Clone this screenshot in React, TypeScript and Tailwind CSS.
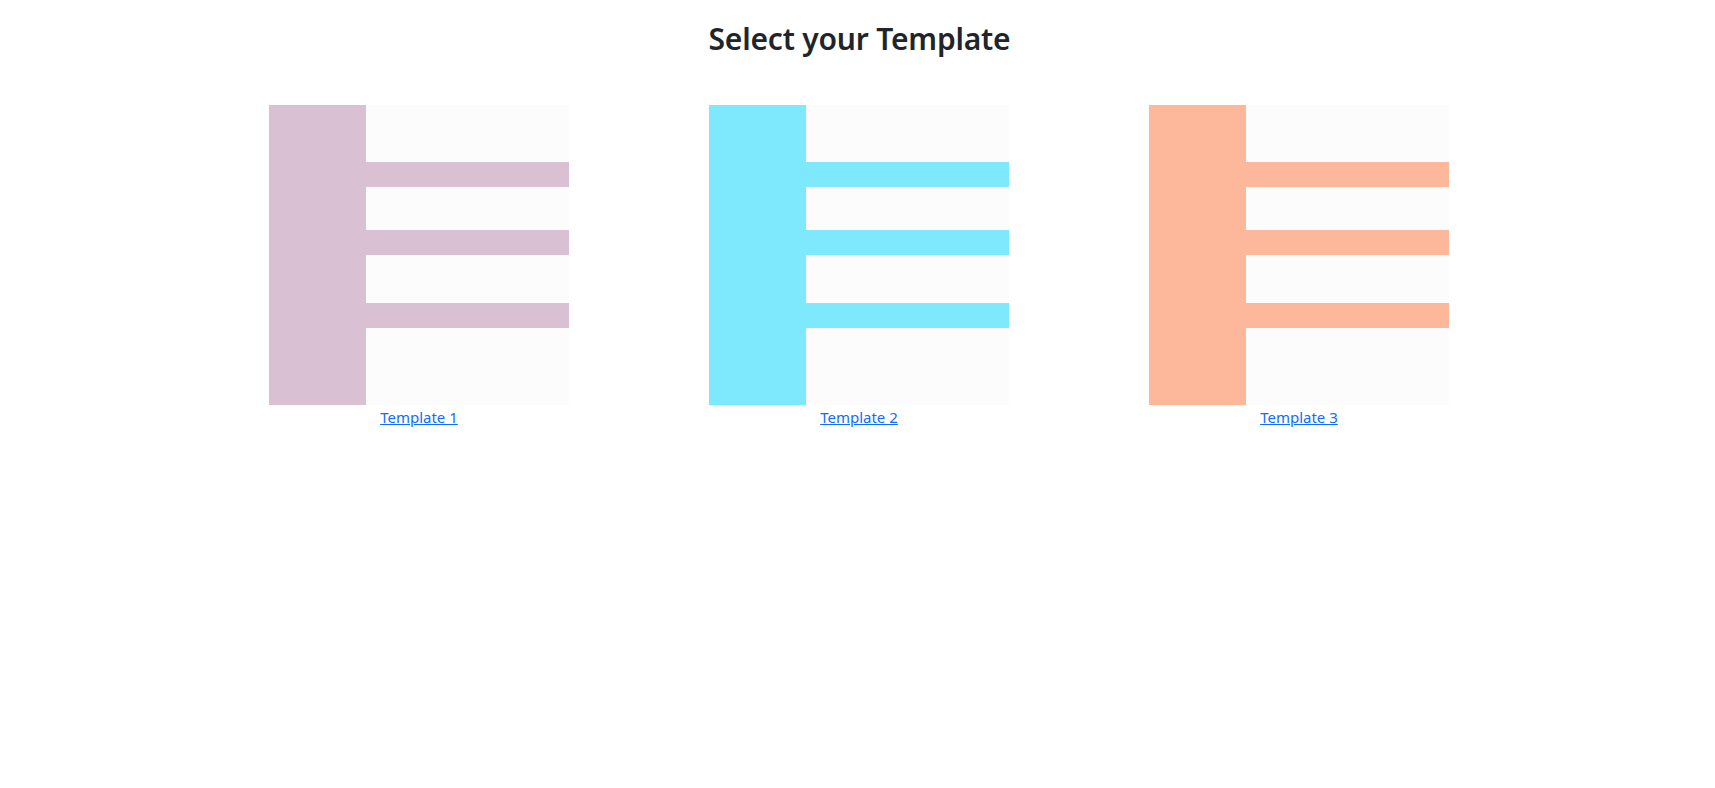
// App.tsx — template picker (3 layout previews)
const templates = [
  { id: 1, name: 'Template 1', color: 'bg-[#d9c0d3]' },
  { id: 2, name: 'Template 2', color: 'bg-[#7ee8fc]' },
  { id: 3, name: 'Template 3', color: 'bg-[#fdb89b]' },
];

const Preview = ({ color }: { color: string }) => (
  <div className="flex w-[300px] h-[300px] bg-[#fcfcfc]">
    <div className={`w-[97px] h-full ${color}`} />
    <div className="flex-1 flex flex-col">
      <div className="h-[57px]" />
      <div className={`h-[25px] ${color}`} />
      <div className="h-[43px]" />
      <div className={`h-[25px] ${color}`} />
      <div className="h-[48px]" />
      <div className={`h-[25px] ${color}`} />
    </div>
  </div>
);

const App = () => {
  return (
    <div className="min-h-screen bg-white text-[#212529] font-['Noto_Sans','Liberation_Sans',sans-serif]">
      <h2 className="pt-[20px] pl-[4px] text-center text-[30px] leading-[38px] font-semibold tracking-[-0.2px]">Select your Template</h2>
      <div className="w-[1323px] mx-auto grid grid-cols-3 mt-[47px] pl-[3px]">
        {templates.map(t => (
          <div key={t.id} className="flex flex-col items-center">
            <Preview color={t.color} />
            <a href="#" className="text-[15px] leading-[24px] text-[#0d6efd] underline">{t.name}</a>
          </div>
        ))}
      </div>
    </div>
  );
};

export default App;
